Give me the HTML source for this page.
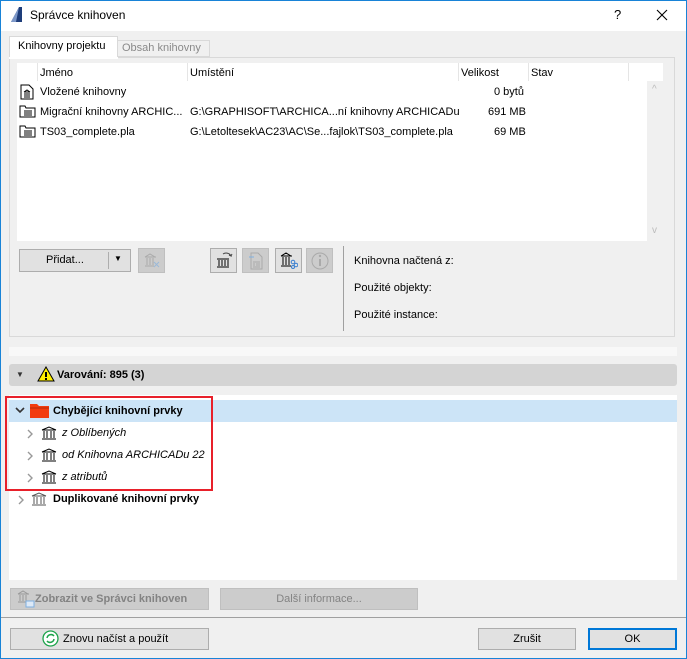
<!DOCTYPE html><html><head><meta charset="utf-8"><style>
*{box-sizing:border-box;margin:0;padding:0}
body{width:687px;height:659px;overflow:hidden;font-family:"Liberation Sans",sans-serif;font-size:11px;color:#000;background:#f0f0f0;position:relative}
.a{position:absolute}
.win{left:0;top:0;width:687px;height:659px;border:1px solid #1883d7}
.btn{position:absolute;background:#e1e1e1;border:1px solid #adadad;text-align:center;line-height:20px}
.dis{background:#cccccc;border-color:#bfbfbf;color:#838383}
.ib{position:absolute;width:27px;height:25px;border:1px solid #adadad;background:#e1e1e1}
.ibd{background:#cccccc;border-color:#bfbfbf}
.t{position:absolute;white-space:nowrap}
</style></head><body>
<div class="a win"></div>
<div class="a" style="left:1px;top:1px;width:685px;height:30px;background:#fff"></div>
<svg class="a" style="left:9px;top:6px" width="14" height="17"><path d="M2 16 L10 1 L13 1 L13 16 Z" fill="#1e3d7a"/><path d="M2 16 L10 1 L7 16Z" fill="#7c97c8"/></svg>
<div class="t" style="left:30px;top:8px;font-size:12px">Správce knihoven</div>
<div class="t" style="left:614px;top:7px;font-size:13px">?</div>
<svg class="a" style="left:656px;top:9px" width="12" height="12"><path d="M1 1l10 10M11 1L1 11" stroke="#000" stroke-width="1.1"/></svg>
<!-- tabs -->
<div class="a" style="left:117px;top:40px;width:93px;height:17px;border:1px solid #d9d9d9;background:#f0f0f0"></div>
<div class="t" style="left:122px;top:42px;color:#8a8a8a">Obsah knihovny</div>
<div class="a" style="left:9px;top:36px;width:109px;height:22px;border:1px solid #d9d9d9;border-bottom:none;background:#fff"></div>
<div class="t" style="left:18px;top:40px">Knihovny projektu</div>
<div class="a" style="left:9px;top:57px;width:666px;height:280px;border:1px solid #d9d9d9;background:#f0f0f0"></div>
<div class="a" style="left:9px;top:57px;width:109px;height:2px;background:#fff"></div>
<!-- list -->
<div class="a" style="left:17px;top:63px;width:646px;height:178px;background:#fff"></div>
<div class="a" style="left:647px;top:81px;width:16px;height:160px;background:#f0f0f0"></div>
<div class="t" style="left:652px;top:84px;color:#bbb;font-size:10px">^</div>
<div class="t" style="left:652px;top:225px;color:#bbb;font-size:10px">v</div>
<div class="a" style="left:37px;top:63px;width:1px;height:18px;background:#e5e5e5"></div>
<div class="a" style="left:187px;top:63px;width:1px;height:18px;background:#e5e5e5"></div>
<div class="a" style="left:458px;top:63px;width:1px;height:18px;background:#e5e5e5"></div>
<div class="a" style="left:528px;top:63px;width:1px;height:18px;background:#e5e5e5"></div>
<div class="a" style="left:628px;top:63px;width:1px;height:18px;background:#e5e5e5"></div>
<div class="t" style="left:40px;top:67px">Jméno</div>
<div class="t" style="left:190px;top:67px">Umístění</div>
<div class="t" style="left:461px;top:67px">Velikost</div>
<div class="t" style="left:531px;top:67px">Stav</div>
<svg class="a" style="left:20px;top:84px" width="14" height="16"><path d="M1 1h8l4 4v10H1z" fill="#fff" stroke="#000"/><path d="M4 8h6M4 13h6M5 9v3M7 9v3M9 9v3M4 8l3-2 3 2" stroke="#000" fill="none"/></svg>
<div class="t" style="left:40px;top:86px">Vložené knihovny</div>
<div class="t" style="left:494px;top:86px">0 bytů</div>
<svg class="a" style="left:19px;top:105px" width="17" height="13"><path d="M1 1h5l1 2h9v9H1z" fill="#fff" stroke="#000"/><path d="M5 6h8M5 10h8M6 7v2M8 7v2M10 7v2M12 7v2" stroke="#000"/></svg>
<div class="t" style="left:40px;top:106px">Migrační knihovny ARCHIC...</div>
<div class="t" style="left:190px;top:106px">G:\GRAPHISOFT\ARCHICA...ní knihovny ARCHICADu</div>
<div class="t" style="left:488px;top:106px">691 MB</div>
<svg class="a" style="left:19px;top:125px" width="17" height="13"><path d="M1 1h5l1 2h9v9H1z" fill="#fff" stroke="#000"/><path d="M5 6h8M5 10h8M6 7v2M8 7v2M10 7v2M12 7v2" stroke="#000"/></svg>
<div class="t" style="left:40px;top:126px">TS03_complete.pla</div>
<div class="t" style="left:190px;top:126px">G:\Letoltesek\AC23\AC\Se...fajlok\TS03_complete.pla</div>
<div class="t" style="left:494px;top:126px">69 MB</div>
<!-- buttons row -->
<div class="btn" style="left:19px;top:249px;width:112px;height:23px"></div>
<div class="t" style="left:46px;top:254px">Přidat...</div>
<div class="a" style="left:108px;top:252px;width:1px;height:17px;background:#adadad"></div>
<div class="t" style="left:114px;top:254px;font-size:8px">▼</div>
<div class="ib ibd" style="left:138px;top:248px"></div>
<svg class="a" style="left:144px;top:253px" width="16" height="15"><path d="M1 4h11M1 13h9M3 5v7M6 5v7M9 5v7M1 4l5-3 5 3" stroke="#aaa" fill="none"/><path d="M10 9l5 5M15 9l-5 5" stroke="#9bb9d8"/></svg>
<div class="ib" style="left:210px;top:248px"></div>
<svg class="a" style="left:215px;top:251px" width="18" height="18"><path d="M8 3a5 4 0 0 1 8 2l-2-1M16 5l1-2" stroke="#444" fill="none"/><path d="M2 8h12M2 16h12M4 9v6M7 9v6M10 9v6M13 9v6" stroke="#000"/></svg>
<div class="ib ibd" style="left:242px;top:248px"></div>
<svg class="a" style="left:248px;top:252px" width="16" height="18"><path d="M3 1h7l4 4v12H3z" fill="none" stroke="#aaa"/><path d="M5 10h7M5 15h7M6 11v3M9 11v3M11 11v3" stroke="#aaa"/><path d="M1 5h5" stroke="#7fb0e0"/></svg>
<div class="ib" style="left:275px;top:248px"></div>
<svg class="a" style="left:280px;top:252px" width="18" height="17"><path d="M1 4h11M1 14h10M3 5v8M6 5v8M9 5v8M1 4l5-3 5 3" stroke="#000" fill="none"/><circle cx="13" cy="10" r="1.8" fill="none" stroke="#3a7fd0"/><circle cx="16" cy="13" r="1.8" fill="none" stroke="#3a7fd0"/><circle cx="13" cy="15" r="1.5" fill="none" stroke="#3a7fd0"/></svg>
<div class="ib ibd" style="left:306px;top:248px"></div>
<svg class="a" style="left:310px;top:251px" width="20" height="20"><circle cx="10" cy="10" r="8" fill="none" stroke="#aaa"/><path d="M10 8v7" stroke="#aaa" stroke-width="2"/><circle cx="10" cy="5" r="1.2" fill="#aaa"/></svg>
<div class="a" style="left:343px;top:246px;width:1px;height:85px;background:#a0a0a0"></div>
<div class="t" style="left:354px;top:255px">Knihovna načtená z:</div>
<div class="t" style="left:354px;top:282px">Použité objekty:</div>
<div class="t" style="left:354px;top:309px">Použité instance:</div>
<!-- strip -->
<div class="a" style="left:9px;top:347px;width:668px;height:9px;background:#f8f8f8"></div>
<div class="a" style="left:9px;top:364px;width:668px;height:22px;background:#d4d4d4;border-radius:3px"></div>
<div class="t" style="left:16px;top:370px;font-size:8px;color:#333">▼</div>
<svg class="a" style="left:37px;top:366px" width="18" height="16"><path d="M9 1L17 15H1Z" fill="#ffef00" stroke="#000"/><path d="M9 6v5" stroke="#000" stroke-width="2"/><rect x="8" y="12" width="2" height="2"/></svg>
<div class="t" style="left:57px;top:369px;font-weight:bold">Varování: 895 (3)</div>
<!-- tree -->
<div class="a" style="left:9px;top:395px;width:668px;height:185px;background:#fff"></div>
<div class="a" style="left:9px;top:400px;width:668px;height:22px;background:#cce4f7"></div>
<div class="a" style="left:5px;top:396px;width:208px;height:95px;border:2px solid #e8202a"></div>
<svg class="a" style="left:15px;top:407px" width="10" height="8"><path d="M1 1l4 4 4-4" stroke="#333" stroke-width="1.6" fill="none"/></svg>
<svg class="a" style="left:30px;top:403px" width="19" height="15"><path d="M0 1h7l2 2h10v12H0z" fill="#f23c0f"/><path d="M0 5h19" stroke="#b52a08"/></svg>
<div class="t" style="left:53px;top:405px;font-weight:bold">Chybějící knihovní prvky</div>
<svg class="a" style="left:27px;top:429px" width="7" height="10"><path d="M1 1l4 4-4 4" stroke="#999" stroke-width="1.4" fill="none"/></svg>
<svg class="a" style="left:27px;top:451px" width="7" height="10"><path d="M1 1l4 4-4 4" stroke="#999" stroke-width="1.4" fill="none"/></svg>
<svg class="a" style="left:27px;top:473px" width="7" height="10"><path d="M1 1l4 4-4 4" stroke="#999" stroke-width="1.4" fill="none"/></svg>
<svg class="a" style="left:41px;top:426px" width="16" height="14"><path d="M1 4h14M1 13h14M3 5v7M6 5v7M10 5v7M13 5v7M1 4l7-3 7 3" stroke="#000" fill="none"/></svg>
<svg class="a" style="left:41px;top:448px" width="16" height="14"><path d="M1 4h14M1 13h14M3 5v7M6 5v7M10 5v7M13 5v7M1 4l7-3 7 3" stroke="#000" fill="none"/></svg>
<svg class="a" style="left:41px;top:470px" width="16" height="14"><path d="M1 4h14M1 13h14M3 5v7M6 5v7M10 5v7M13 5v7M1 4l7-3 7 3" stroke="#000" fill="none"/></svg>
<div class="t" style="left:62px;top:427px;font-style:italic">z Oblíbených</div>
<div class="t" style="left:62px;top:449px;font-style:italic">od Knihovna ARCHICADu 22</div>
<div class="t" style="left:62px;top:471px;font-style:italic">z atributů</div>
<svg class="a" style="left:18px;top:495px" width="7" height="10"><path d="M1 1l4 4-4 4" stroke="#999" stroke-width="1.4" fill="none"/></svg>
<svg class="a" style="left:31px;top:492px" width="19" height="14"><path d="M1 4h14M1 13h14M3 5v7M6 5v7M10 5v7M13 5v7M1 4l7-3 7 3" stroke="#555" fill="none"/></svg>
<div class="t" style="left:53px;top:493px;font-weight:bold">Duplikované knihovní prvky</div>
<!-- bottom -->
<div class="btn dis" style="left:10px;top:588px;width:199px;height:22px"></div>
<svg class="a" style="left:17px;top:590px" width="18" height="18"><path d="M1 4h11M1 12h10M3 5v6M6 5v6M9 5v6M1 4l5-3 5 3" stroke="#999" fill="none"/><rect x="9" y="11" width="8" height="6" fill="#dde9f7" stroke="#7fb0e0"/></svg>
<div class="t" style="left:35px;top:593px;font-weight:bold;color:#838383">Zobrazit ve Správci knihoven</div>
<div class="btn dis" style="left:220px;top:588px;width:198px;height:22px">Další informace...</div>
<div class="a" style="left:1px;top:617px;width:685px;height:1px;background:#a0a0a0"></div>
<div class="btn" style="left:10px;top:628px;width:199px;height:22px"></div>
<svg class="a" style="left:42px;top:630px" width="17" height="17"><circle cx="8.5" cy="8.5" r="7.5" fill="#fff" stroke="#1ca34a" stroke-width="1.3"/><path d="M5 8a4 4 0 0 1 7-2M12 9a4 4 0 0 1-7 2" stroke="#1ca34a" stroke-width="1.5" fill="none"/></svg>
<div class="t" style="left:63px;top:633px">Znovu načíst a použít</div>
<div class="btn" style="left:478px;top:628px;width:98px;height:22px">Zrušit</div>
<div class="btn" style="left:588px;top:628px;width:89px;height:22px;border:2px solid #0078d7;line-height:18px">OK</div>
</body></html>
